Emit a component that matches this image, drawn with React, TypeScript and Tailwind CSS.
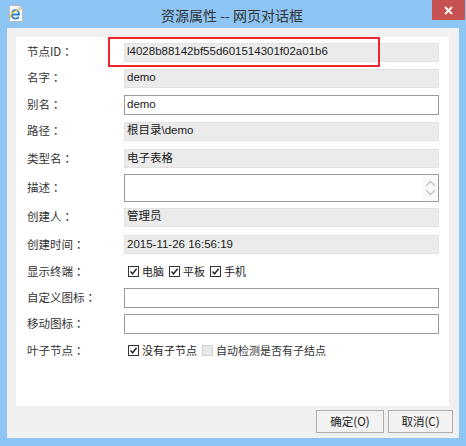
const latin = { fontFamily: '"Liberation Sans", Arial, "Noto Sans CJK SC", sans-serif' };
const cjk = { fontFamily: '"Noto Sans CJK SC", sans-serif' };
const colon = { fontFamily: '"Noto Sans CJK TC", sans-serif' };

type Row = {
    label: string;
    h: string;
    kind: 'ro' | 'input' | 'area' | 'checks' | 'leaf';
    value?: string;
};

const rows: Row[] = [
    { label: '节点ID', h: 'h-[26px]', kind: 'ro', value: 'l4028b88142bf55d601514301f02a01b6' },
    { label: '名字', h: 'h-[26px]', kind: 'ro', value: 'demo' },
    { label: '别名', h: 'h-[27px]', kind: 'input', value: 'demo' },
    { label: '路径', h: 'h-[26px]', kind: 'ro', value: '根目录\\demo' },
    { label: '类型名', h: 'h-[29px]', kind: 'ro', value: '电子表格' },
    { label: '描述', h: 'h-[30px]', kind: 'area' },
    { label: '创建人', h: 'h-[28px]', kind: 'ro', value: '管理员' },
    { label: '创建时间', h: 'h-[27px]', kind: 'ro', value: '2015-11-26 16:56:19' },
    { label: '显示终端', h: 'h-[27px]', kind: 'checks' },
    { label: '自定义图标', h: 'h-[25px]', kind: 'input', value: '' },
    { label: '移动图标', h: 'h-[27px]', kind: 'input', value: '' },
    { label: '叶子节点', h: 'h-[27px]', kind: 'leaf' },
];

function Check({ checked = true }: { checked?: boolean }): React.ReactElement {
    if (!checked)
        return <span className="w-[11px] h-[11px] border border-[#cfcfcf] bg-[#e8e8e8] shrink-0" />;
    return (
        <span className="w-[11px] h-[11px] border border-[#333] bg-white shrink-0 flex items-center justify-center">
            <svg width="9" height="9" viewBox="0 0 9 9">
                <path d="M1.5 4.5 L3.6 6.8 L7.6 1.8" fill="none" stroke="#222" strokeWidth="1.4" />
            </svg>
        </span>
    );
}

function Field({ row }: { row: Row }): React.ReactElement {
    if (row.kind === 'ro')
        return (
            <div style={latin} className="w-[315px] h-[19px] bg-[#ebebeb] border border-[#e2e2e2] flex items-center pl-[2px] text-[11.5px] text-[#1a1a1a]">
                {row.value}
            </div>
        );
    if (row.kind === 'input')
        return (
            <div style={latin} className="w-[315px] h-[20px] bg-white border border-[#9a9a9a] flex items-center pl-[2px] text-[11.5px] text-[#1a1a1a]">
                {row.value}
            </div>
        );
    if (row.kind === 'area')
        return (
            <div className="w-[315px] h-[28px] bg-white border border-[#9a9a9a] flex justify-end">
                <div className="w-[16px] flex flex-col items-center justify-center gap-[2px] bg-[#fafafa]">
                    <svg width="11" height="7" viewBox="0 0 11 7">
                        <path d="M1 6 L5.5 1.5 L10 6" fill="none" stroke="#c4c4c4" strokeWidth="1.3" />
                    </svg>
                    <svg width="11" height="7" viewBox="0 0 11 7">
                        <path d="M1 1 L5.5 5.5 L10 1" fill="none" stroke="#c4c4c4" strokeWidth="1.3" />
                    </svg>
                </div>
            </div>
        );
    if (row.kind === 'checks')
        return (
            <div style={cjk} className="flex items-center pl-[4px] text-[11px] text-[#1a1a1a]">
                {['电脑', '平板', '手机'].map((t) => (
                    <span key={t} className="flex items-center gap-[3px] mr-[5px]">
                        <Check />
                        {t}
                    </span>
                ))}
            </div>
        );
    return (
        <div style={cjk} className="flex items-center pl-[4px] text-[11px] text-[#1a1a1a]">
            <span className="flex items-center gap-[3px] mr-[5px]">
                <Check />
                没有子节点
            </span>
            <span className="flex items-center gap-[3px] text-[#333]">
                <Check checked={false} />
                自动检测是否有子结点
            </span>
        </div>
    );
}

export default function App(): React.ReactElement {
    return (
        <div style={cjk} className="w-[466px] h-[446px] bg-[#8dc6f5] flex flex-col">
            <div className="h-[28px] relative flex items-center justify-center shrink-0">
                <svg className="absolute left-[8px] top-[5px]" width="16" height="17" viewBox="0 0 16 17">
                    <path d="M1.5 0.5 H11 L14.5 4 V16.5 H1.5 Z" fill="#fff" stroke="#b9b9b9" />
                    <path d="M11 0.5 V4 H14.5" fill="#eee" stroke="#b9b9b9" />
                    <path d="M4 9.5 H11 C11 6.5 9.5 5.2 7.5 5.2 C5.3 5.2 4 7 4 9.5 C4 12 5.5 13.6 7.6 13.6 C9.2 13.6 10.3 12.8 10.8 11.6" fill="none" stroke="#2a7fd4" strokeWidth="1.8" />
                    <path d="M2.5 13 C1.5 9 6 5 12.5 4.5" fill="none" stroke="#f2c230" strokeWidth="1.2" />
                </svg>
                <span className="text-[14px] text-[#333] ml-[-2px] mt-[2px]">
                    资源属性 -- 网页对话框
                </span>
                <div className="absolute right-[1px] top-0 w-[33px] h-[20px] bg-[#c75050] flex items-center justify-center">
                    <svg width="9" height="9" viewBox="0 0 9 9">
                        <path d="M1 1 L8 8 M8 1 L1 8" stroke="#fff" strokeWidth="1.8" />
                    </svg>
                </div>
            </div>
            <div className="mx-[7px] mb-[8px] flex-1 bg-[#f0f0f0] flex flex-col">
                <div className="mt-[9px] ml-[9px] mr-[10px] h-[369px] bg-white relative pt-[2px]">
                    {rows.map((row) => (
                        <div key={row.label} className={`${row.h} flex items-center`}>
                            <div className="w-[108px] pl-[11px] text-[11.5px] text-[#333]">
                                {row.label}
                                <span style={colon}>：</span>
                            </div>
                            <Field row={row} />
                        </div>
                    ))}
                    <div className="absolute left-[92px] top-0 w-[272px] h-[30px] border-2 border-[#e8262b]" />
                </div>
                <div className="flex justify-end gap-[4px] mt-[4px] mr-[6px]">
                    <button className="w-[68px] h-[23px] border border-[#adadad] bg-[#f2f2f2] text-[11.5px] text-[#222]">确定(O)</button>
                    <button className="w-[65px] h-[23px] border border-[#adadad] bg-[#f2f2f2] text-[11.5px] text-[#222]">取消(C)</button>
                </div>
            </div>
        </div>
    );
}
